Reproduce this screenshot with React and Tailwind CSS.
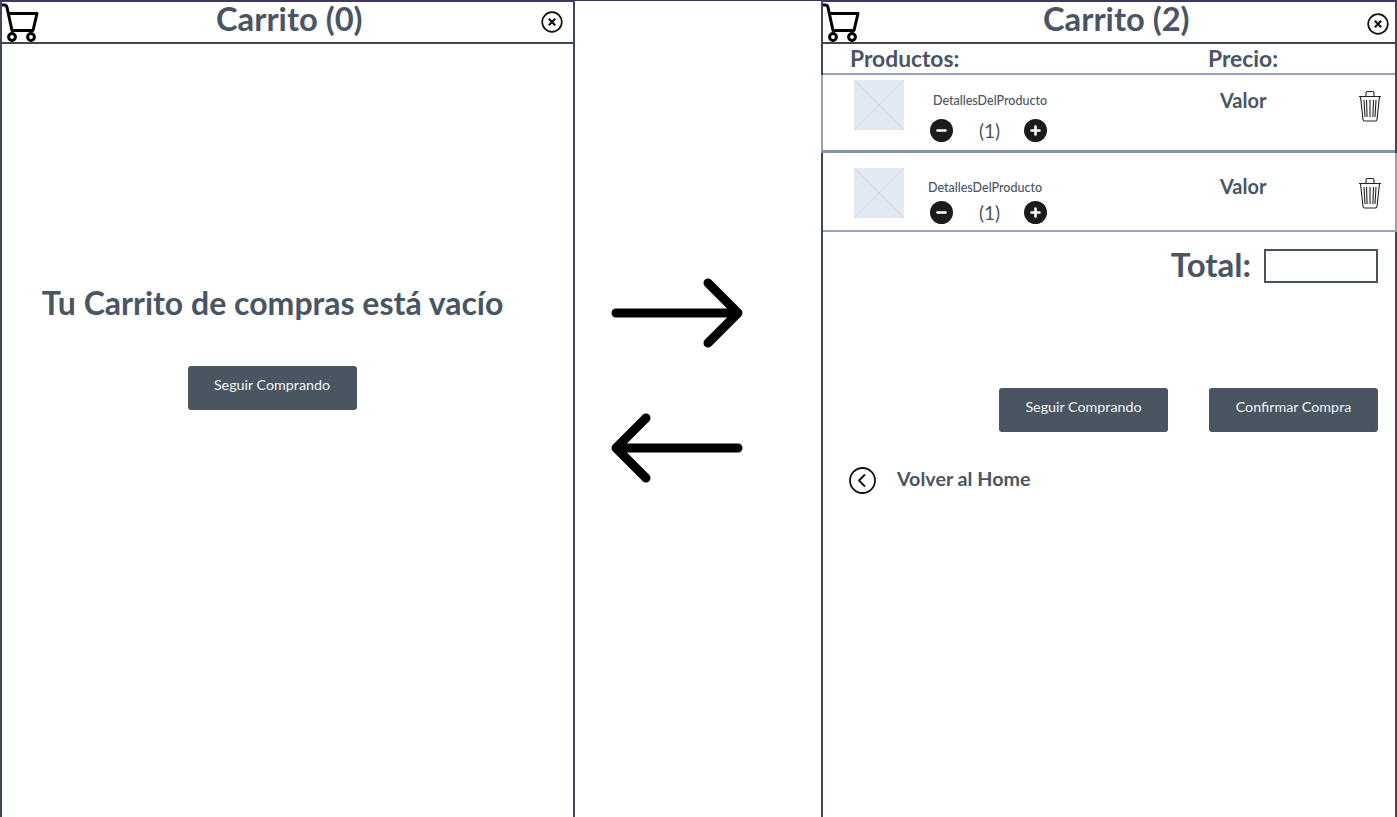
import React from 'react';

function CartIcon() {
  return (
    <svg width="40" height="40" viewBox="0 0 40 40" fill="none" stroke="#000" strokeWidth="3" className="shrink-0">
      <path d="M0 3h2.500q2 0 2.500 2.500L10 28.500h21L35 11.500H6" strokeLinejoin="round" />
      <circle cx="10" cy="35" r="3.400" />
      <circle cx="29" cy="35" r="3.400" />
    </svg>
  );
}

function CloseIcon({ className }) {
  return (
    <svg width="22" height="22" viewBox="0 0 22 22" fill="none" stroke="#111" className={`shrink-0 ${className}`}>
      <circle cx="11" cy="11" r="9.800" strokeWidth="1.700" />
      <path d="M7.800 7.800l6.400 6.400M14.200 7.800l-6.400 6.400" strokeWidth="2.200" />
    </svg>
  );
}

function TrashIcon({ className }) {
  return (
    <svg width="24" height="32" viewBox="0 0 24 32" fill="none" stroke="#222" strokeWidth="1.100" className={`shrink-0 ${className}`}>
      <path d="M1 6.500h22M2.500 6.500L5 29.500q.2 1.500 1.500 1.500h11q1.300 0 1.500-1.500L21.500 6.500M8 6V3q0-1.500 1.500-1.500h5Q16 1.500 16 3v3" />
      <path d="M8.500 10l.6 17M12 10v17M15.500 10l-.6 17M6 10l1 17M18 10l-1 17" />
    </svg>
  );
}

function Placeholder() {
  return (
    <svg width="50" height="50" viewBox="0 0 50 50" className="shrink-0">
      <rect width="50" height="50" fill="#e2e8f0" />
      <path d="M0 0l50 50M50 0L0 50" stroke="#cbd5e1" strokeWidth="1" />
    </svg>
  );
}

function QtyButton({ plus }) {
  return (
    <svg width="23" height="23" viewBox="0 0 23 23" className="shrink-0">
      <circle cx="11.500" cy="11.500" r="11.500" fill="#1c1a1b" />
      <path d={plus ? 'M7.500 11.500h8M11.500 7.500v8' : 'M7.500 11.500h8'} stroke="#fff" strokeWidth="2.600" strokeLinecap="round" />
    </svg>
  );
}

function Arrow({ left }) {
  return (
    <svg width="136" height="72" viewBox="0 0 136 72" fill="none" stroke="#000" strokeWidth="9" strokeLinecap="round" strokeLinejoin="round">
      {left ? (
        <path d="M128 36H6M36 6L6 36l30 30" />
      ) : (
        <path d="M6 36h122M98 6l30 30-30 30" />
      )}
    </svg>
  );
}

function Header({ count, titleClass, closeClass }) {
  return (
    <div className="flex items-center h-[42px] border-b-2 border-[#3f4658] shrink-0">
      <CartIcon />
      <h1 className={`text-[32.700px] leading-none font-bold text-[#4a5563] -mt-[6px] mr-auto ${titleClass}`}>Carrito ({count})</h1>
      <CloseIcon className={closeClass} />
    </div>
  );
}

function Button({ children }) {
  return (
    <button className="w-[169px] h-[44px] rounded-[3px] bg-[#4a5562] text-[14.300px] text-[#f1f5f9] pb-[6px]">{children}</button>
  );
}

function ProductRow({ rowClass, detailsClass, qtyGap, priceClass, trashClass }) {
  return (
    <div className={`flex shrink-0 pl-[31px] ${rowClass}`}>
      <Placeholder />
      <div className="flex flex-col w-[290px]">
        <span className={`text-[12.500px] leading-none font-medium text-[#4a5563] ${detailsClass}`}>DetallesDelProducto</span>
        <div className={`flex items-center ml-[26px] ${qtyGap}`}>
          <QtyButton />
          <span className="w-[71px] pl-[2px] text-center text-[19px] leading-none text-[#4a5563]">(1)</span>
          <QtyButton plus />
        </div>
      </div>
      <span className={`w-[164px] pl-[26px] text-[20px] leading-none font-bold text-[#4a5563] ${priceClass}`}>Valor</span>
      <TrashIcon className={trashClass} />
    </div>
  );
}

export default function App() {
  return (
    <div className="flex h-[817px] w-[1397px] overflow-hidden bg-white font-['Lato','Liberation_Sans',sans-serif]">
      <section className="flex flex-col w-[575px] shrink-0 border-x-2 border-t-2 border-[#3f4658] border-t-[#3d3a5f]">
        <Header count={0} titleClass="ml-[174px]" closeClass="mr-[10px]" />
        <div className="flex flex-col items-center pt-[240px]">
          <h2 className="text-[32px] leading-[38px] font-bold text-[#4a5563] whitespace-nowrap -ml-[30px]">Tu Carrito de compras está vacío</h2>
          <div className="mt-[44px] -ml-[31px]">
            <Button>Seguir Comprando</Button>
          </div>
        </div>
      </section>

      <div className="flex flex-col items-start w-[246px] shrink-0 border-t border-[#3b2f63] pt-[276px] gap-[63px] pl-[35px]">
        <Arrow />
        <Arrow left />
      </div>

      <section className="flex flex-col w-[576px] shrink-0 border-x-2 border-t-2 border-[#3f4658] border-t-[#3d3a5f]">
        <Header count={2} titleClass="ml-[180px]" closeClass="mr-[6px] mt-[4px]" />
        <div className="flex shrink-0 h-[31px] items-center pl-[27px] text-[22.800px] leading-none font-bold text-[#4a5563] border-b-2 border-[#94a3b8]">
          <span className="w-[358px]">Productos:</span>
          <span>Precio:</span>
        </div>
        <ProductRow
          rowClass="h-[78px] pt-[5px] -ml-[2px] border-l-2 border-l-[#94a3b8] border-b-[3px] border-b-[#8492a6]"
          detailsClass="mt-[15px] ml-[29px]"
          qtyGap="mt-[11px]"
          priceClass="pt-[10px]"
          trashClass="mt-[10px]"
        />
        <ProductRow
          rowClass="h-[79px] pt-[15px] -mr-[2px] border-r-2 border-r-[#94a3b8] border-b-2 border-b-[#94a3b8]"
          detailsClass="mt-[14px] ml-[24px]"
          qtyGap="mt-[6px]"
          priceClass="pt-[8px]"
          trashClass="mt-[9px]"
        />
        <div className="flex items-center justify-end pr-[17px] mt-[17px]">
          <span className="text-[33px] leading-none font-bold text-[#4a5563] mr-[13px] -mt-[4px]">Total:</span>
          <div className="w-[114px] h-[34px] border-2 border-[#475260]" />
        </div>
        <div className="flex justify-end gap-[41px] pr-[17px] mt-[105px]">
          <Button>Seguir Comprando</Button>
          <Button>Confirmar Compra</Button>
        </div>
        <div className="flex items-center mt-[35px] pl-[26px]">
          <svg width="27" height="27" viewBox="0 0 27 27" fill="none" stroke="#111" strokeWidth="1.800">
            <circle cx="13.500" cy="13.500" r="12.500" />
            <path d="M15.500 8l-5.500 5.500 5.500 5.500" strokeLinecap="round" strokeLinejoin="round" />
          </svg>
          <span className="ml-[21px] text-[19.700px] leading-none font-bold text-[#4a5563] -mt-[3px]">Volver al Home</span>
        </div>
      </section>
    </div>
  );
}
